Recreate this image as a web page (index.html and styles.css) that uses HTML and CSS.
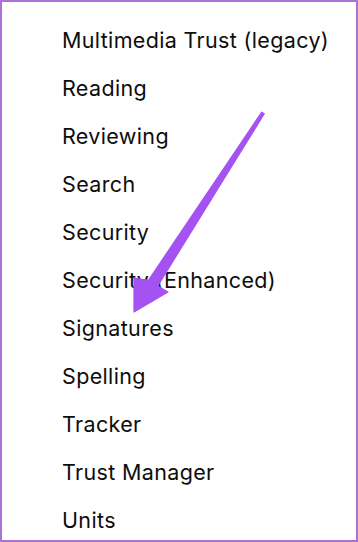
FILE: index.html
```html
<!DOCTYPE html>
<html lang="en">
<head>
    <meta charset="UTF-8">
    <meta name="viewport" content="width=device-width, initial-scale=1.0">
    <title>Preferences</title>
    <link rel="stylesheet" href="styles.css">
</head>
<body>
    <div class="frame">
        <ul class="categories">
            <li>Multimedia Trust (legacy)</li>
            <li>Reading</li>
            <li>Reviewing</li>
            <li>Search</li>
            <li>Security</li>
            <li>Security (Enhanced)</li>
            <li>Signatures</li>
            <li>Spelling</li>
            <li>Tracker</li>
            <li>Trust Manager</li>
            <li>Units</li>
        </ul>

        <!-- pointer arrow drawn over the list -->
        <svg class="arrow" width="358" height="542" viewBox="0 0 358 542">
            <polygon points="264.3,113.8 261.7,112.2 148.4,280.3 134,278 134,312 168,292 157.6,286.1"
                     fill="#a552f2" stroke="#a552f2" stroke-width="1.2" stroke-linejoin="round"/>
        </svg>
    </div>
</body>
</html>
```

FILE: styles.css
```css
html, body {
    margin: 0;
    padding: 0;
    background: #fff;
}
body {
    font-family: Inter, "Liberation Sans", sans-serif;
    color: #0d0d0d;
}
.frame {
    position: relative;
    box-sizing: border-box;
    width: 358px;
    height: 542px;
    border: 2px solid #a873d8;
    overflow: hidden;
}
.categories {
    list-style: none;
    margin: 0;
    padding: 14px 0 0 60px;
}
.categories li {
    font-size: 21.5px;
    letter-spacing: 0.35px;
    line-height: 48px;
    white-space: nowrap;
}
.arrow {
    position: absolute;
    left: -2px;
    top: -2px;
}
```
